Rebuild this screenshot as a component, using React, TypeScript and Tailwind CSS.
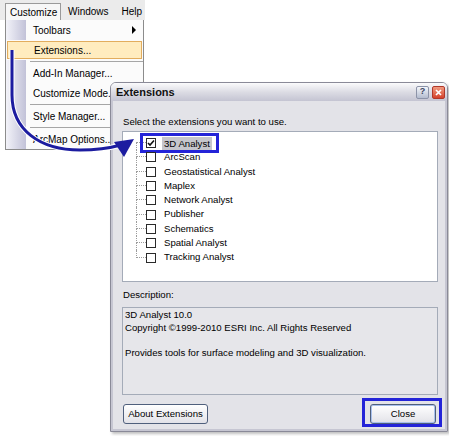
import React from "react";

const extensions = [
  "3D Analyst",
  "ArcScan",
  "Geostatistical Analyst",
  "Maplex",
  "Network Analyst",
  "Publisher",
  "Schematics",
  "Spatial Analyst",
  "Tracking Analyst",
];

function MenuRow({ label, active, arrow }: { label: string; active?: boolean; arrow?: boolean }) {
  if (active) {
    return (
      <div className="h-[20px] p-px">
        <div className="h-full flex items-center border border-[#e2ad5e] bg-[#ffecbf] pl-[26px]">{label}</div>
      </div>
    );
  }
  return (
    <div className="h-[20px] flex">
      <div className="w-[20px] bg-gradient-to-r from-[#f3f3f9] to-[#c2c2d8]" />
      <div className="flex-1 flex items-center pl-[7px] pr-[7px] justify-between">
        <span>{label}</span>
        {arrow && (
          <span className="w-0 h-0 border-y-[4px] border-y-transparent border-l-[4px] border-l-black" />
        )}
      </div>
    </div>
  );
}

function Separator() {
  return (
    <div className="h-[3px] flex">
      <div className="w-[20px] bg-gradient-to-r from-[#f3f3f9] to-[#c2c2d8]" />
      <div className="flex-1 flex items-center pl-[4px]">
        <div className="h-px w-full bg-[#a6a6a6]" />
      </div>
    </div>
  );
}

function Menu() {
  return (
    <div className="w-[145px]">
      <div className="h-[20px] bg-[#ebebeb] flex items-end pl-[5px]">
        <div className="h-[17px] w-[56px] border border-b-0 border-[#9a9a9a] bg-[#f7f7f7] flex items-center pl-[4px]">
          Customize
        </div>
        <div className="h-[17px] flex items-center pl-[7px]">Windows</div>
        <div className="h-[17px] flex items-center pl-[13px]">Help</div>
      </div>
      <div className="ml-[5px] w-[139px] border border-t-0 border-[#8c8c8c] bg-[#fbfbfb]">
        <MenuRow label="Toolbars" arrow />
        <MenuRow label="Extensions..." active />
        <Separator />
        <MenuRow label="Add-In Manager..." />
        <MenuRow label="Customize Mode..." />
        <Separator />
        <MenuRow label="Style Manager..." />
        <Separator />
        <MenuRow label="ArcMap Options..." />
      </div>
    </div>
  );
}

function ExtensionRow({ name, index }: { name: string; index: number }) {
  const first = index === 0;
  const last = index === extensions.length - 1;
  return (
    <div className="h-[14.3px] flex items-center">
      <div className="ml-[13px] w-[10px] h-full flex flex-col">
        <div className={`h-1/2 border-b border-dotted border-b-[#9c9c9c] ${first ? "" : "border-l border-dotted border-l-[#9c9c9c]"}`} />
        <div className={`h-1/2 ${last ? "" : "border-l border-dotted border-l-[#9c9c9c]"}`} />
      </div>
      <div className="relative w-[10px] h-[10px] border border-[#2a2a2a] bg-white flex items-center justify-center">
        {first && (
          <svg width="8" height="8" viewBox="0 0 8 8">
            <path d="M1 4 L3 6 L7 1.5" fill="none" stroke="#111" strokeWidth="1.6" />
          </svg>
        )}
        {first && (
          <div className="absolute left-[-7px] top-[-6px] w-[79px] h-[20px] border-[3px] border-[#2424d8]" />
        )}
      </div>
      <span className={first ? "ml-[6px] px-[2px] bg-[#c6c6cc] leading-[13px]" : "ml-[8px]"}>{name}</span>
    </div>
  );
}

function Dialog() {
  return (
    <div className="absolute left-[110px] top-[82px] w-[338px] h-[350px] flex flex-col border border-[#8a8a98] rounded-t-[6px] overflow-hidden shadow-[2px_2px_3px_rgba(0,0,0,0.25)]">
      <div className="h-[18px] flex items-center justify-between pl-[5px] pr-[2px] bg-gradient-to-b from-[#fbfbfc] via-[#dcdce4] to-[#c4c4d2]">
        <span className="text-[11px] font-bold text-[#111]">Extensions</span>
        <div className="flex gap-[3px]">
          <div className="w-[13px] h-[13px] rounded-[2px] border border-[#8c93a8] bg-gradient-to-b from-[#f4f6fb] to-[#b4bccf] flex items-center justify-center text-[9px] font-bold text-[#3c4660]">
            ?
          </div>
          <div className="w-[13px] h-[13px] rounded-[2px] border border-[#b0382a] bg-gradient-to-b from-[#f09a80] to-[#d4402a] flex items-center justify-center">
            <svg width="7" height="7" viewBox="0 0 7 7">
              <path d="M1 1 L6 6 M6 1 L1 6" stroke="white" strokeWidth="1.7" />
            </svg>
          </div>
        </div>
      </div>
      <div className="flex-1 bg-[#e3e3e8] border-x-[2px] border-b-[2px] border-[#c6c6d2] pl-[9px] pr-[7px] pt-[15px] text-[9.6px]">
        <div className="leading-[12px] pl-px">Select the extensions you want to use.</div>
        <div className="mt-[3px] h-[151px] bg-white border border-[#a4abb8] pt-[4px]">
          {extensions.map((name, i) => (
            <ExtensionRow key={name} name={name} index={i} />
          ))}
        </div>
        <div className="mt-[7px] leading-[12px] pl-px">Description:</div>
        <div className="mt-[6px] h-[88px] border border-[#a4abb8] bg-[#e6e6ea] pl-[2px] pt-px leading-[12.5px]">
          <div>3D Analyst 10.0</div>
          <div>Copyright ©1999-2010 ESRI Inc. All Rights Reserved</div>
          <div>&nbsp;</div>
          <div>Provides tools for surface modeling and 3D visualization.</div>
        </div>
        <div className="mt-[9px] flex justify-between pl-px pr-[2px]">
          <button className="w-[85px] h-[20px] rounded-[3px] border border-[#4f5f7c] bg-gradient-to-b from-white to-[#e2e2e8] text-[9.6px]">
            About Extensions
          </button>
          <div className="relative">
            <button className="w-[66px] h-[20px] rounded-[3px] border border-[#4f5f7c] bg-gradient-to-b from-white to-[#e2e2e8] shadow-[inset_0_0_0_1px_#a8c0ec] text-[9.6px]">
              Close
            </button>
            <div className="absolute left-[-8px] top-[-6px] w-[80px] h-[29px] border-[3px] border-[#2424d8]" />
          </div>
        </div>
      </div>
    </div>
  );
}

function Arrow() {
  return (
    <svg className="absolute inset-0 pointer-events-none" width="449" height="436" viewBox="0 0 449 436">
      <path
        d="M12 50 L12 95 C12 130 40 150 80 150 C98 150 110 148 121 145"
        fill="none"
        stroke="white"
        strokeWidth="5"
      />
      <path
        d="M12 50 L12 95 C12 130 40 150 80 150 C98 150 110 148 121 145"
        fill="none"
        stroke="#1c1ca0"
        strokeWidth="3"
      />
      <polygon points="134,139 114,142 124,157" fill="#1c1ca0" />
    </svg>
  );
}

export default function App() {
  return (
    <div className="relative w-[449px] h-[436px] bg-white overflow-hidden font-['Liberation_Sans',Arial,sans-serif] text-[10px] text-black">
      <Menu />
      <Dialog />
      <Arrow />
    </div>
  );
}
